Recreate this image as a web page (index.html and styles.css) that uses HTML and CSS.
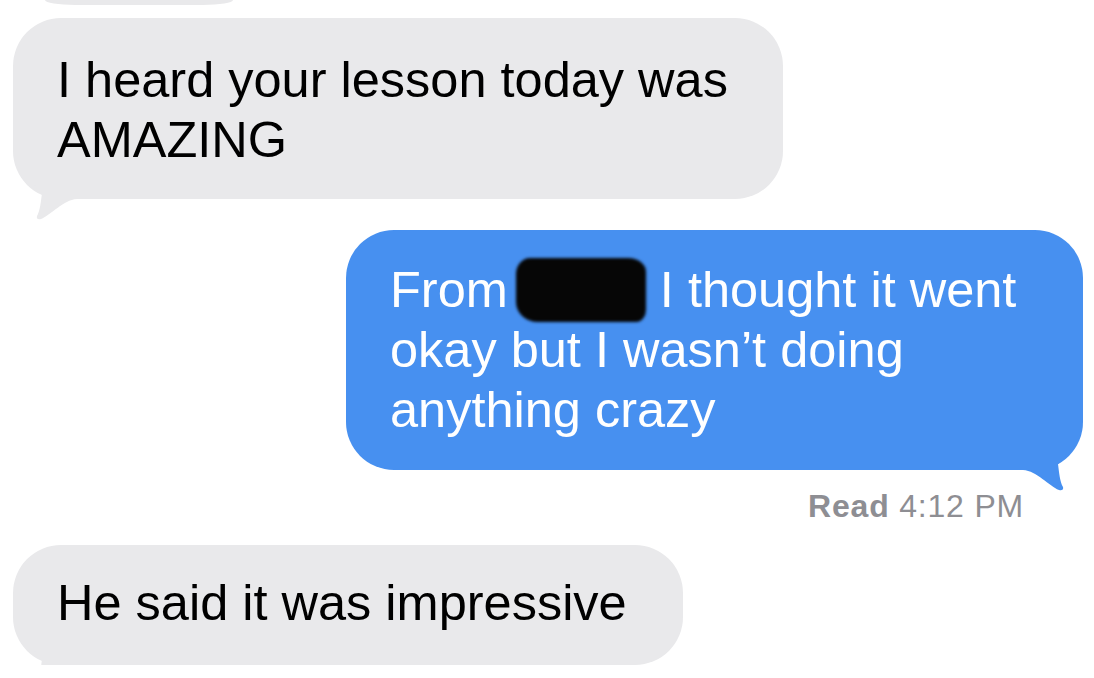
FILE: index.html
```html
<!DOCTYPE html>
<html lang="en">
<head>
  <meta charset="UTF-8">
  <meta name="viewport" content="width=device-width, initial-scale=1.0">
  <title>Messages</title>
  <link rel="stylesheet" href="styles.css">
</head>
<body>
<div class="thread">
  <div class="bubble in stub"></div>

  <div class="bubble in first">
    <p>I heard your lesson today was<br>AMAZING</p>
    <svg class="tail" width="60" height="40" viewBox="0 0 60 40"><path d="M0 0 C2 6 6 10 9 12 C8 20 7 30 4 35 Q3 39 8 38 C18 34 30 19 44 18 L60 18 L60 0 Z"/></svg>
  </div>

  <div class="bubble out">
    <p>From<span class="redact"></span>I thought it went<br>okay but I wasn’t doing<br>anything crazy</p>
    <svg class="tail" width="60" height="40" viewBox="0 0 60 40"><path d="M0 0 C2 6 6 10 9 12 C8 20 7 30 4 35 Q3 39 8 38 C18 34 30 19 44 18 L60 18 L60 0 Z"/></svg>
  </div>

  <div class="receipt"><span class="receipt-label">Read</span> 4:12 PM</div>

  <div class="bubble in last">
    <p>He said it was impressive</p>
    <svg class="tail" width="60" height="40" viewBox="0 0 60 40"><path d="M0 0 C2 6 6 10 9 12 C8 20 7 30 4 35 Q3 39 8 38 C18 34 30 19 44 18 L60 18 L60 0 Z"/></svg>
  </div>
</div>
</body>
</html>
```

FILE: styles.css
```css
body{
  margin:0;
  background:#fff;
  font-family:"Liberation Sans", Arial, sans-serif;
  overflow:hidden;
}
.thread{
  display:flex;
  flex-direction:column;
  padding:0 11px 0 13px;
}
.bubble{
  position:relative;
  border-radius:48px;
}
.bubble p{
  margin:0;
  font-size:50.5px;
  line-height:60px;
}
.bubble.in{
  align-self:flex-start;
  background:#e9e9eb;
  color:#000;
}
.bubble.out{
  align-self:flex-end;
  background:#4790f0;
  color:#fff;
  width:653px;
  margin-top:31px;
  padding:30px 40px 30px 44px;
}
.stub{
  width:188px;
  height:5px;
  margin-left:32px;
  border-radius:0 0 30px 30px / 0 0 5px 5px;
}
.first{
  width:686px;
  margin-top:13px;
  padding:32px 40px 29px 44px;
}
.last{
  width:586px;
  margin-top:21px;
  padding:28px 40px 32px 44px;
}
.tail{
  position:absolute;
  bottom:-22px;
  left:20px;
}
.bubble.in .tail path{
  fill:#e9e9eb;
}
.bubble.out .tail{
  left:auto;
  right:16px;
  transform:scaleX(-1);
}
.bubble.out .tail path{
  fill:#4790f0;
}
.redact{
  display:inline-block;
  width:130px;
  height:64px;
  margin:-6px 14px -4px 8px;
  vertical-align:-11px;
  background:#060606;
  border-radius:14px 18px 10px 22px / 16px 14px 12px 20px;
  filter:blur(1.5px);
}
.receipt{
  align-self:flex-end;
  margin:18px 59px 0 0;
  font-size:32px;
  letter-spacing:0.8px;
  line-height:36px;
  color:#8e8e93;
}
.receipt-label{
  font-weight:bold;
}
```
